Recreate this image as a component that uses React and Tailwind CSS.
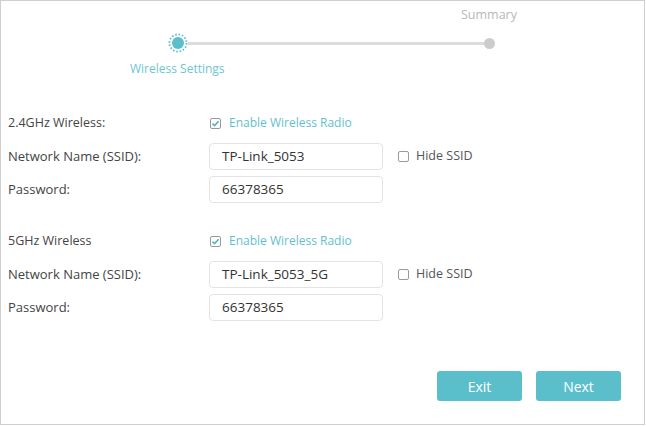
import React from "react";

const font = { fontFamily: '"Open Sans", "Noto Sans", sans-serif' };

function Check({ checked }) {
  return (
    <span className="flex h-[11px] w-[11px] items-center justify-center rounded-[2px] border border-[#9a9a9a] bg-white">
      {checked && (
        <svg width="9" height="9" viewBox="0 0 9 9">
          <path d="M1.5 4.6 L3.6 6.6 L7.6 2.3" fill="none" stroke="#4fb6c3" strokeWidth="1.6" />
        </svg>
      )}
    </span>
  );
}

function Input({ value }) {
  return (
    <div className="flex h-[27px] w-[174px] items-center rounded-[4px] border border-[#e3e3e3] pl-[12px] text-[13.5px] text-[#333]">
      {value}
    </div>
  );
}

function Section({ title, ssid, pwd }) {
  return (
    <div className="flex flex-col">
      <div className="flex h-[20px] items-center">
        <div className="w-[202px] text-[12.5px] text-[#444]">{title}</div>
        <div className="flex items-center gap-[8px]">
          <Check checked />
          <span className="text-[12px] text-[#5fc1cd]">Enable Wireless Radio</span>
        </div>
      </div>
      <div className="mt-[10px] flex items-center">
        <div className="w-[201px] text-[13px] text-[#444]">Network Name (SSID):</div>
        <Input value={ssid} />
        <div className="ml-[15px] flex items-center gap-[7px]">
          <Check />
          <span className="text-[12.5px] text-[#555]">Hide SSID</span>
        </div>
      </div>
      <div className="mt-[6px] flex items-center">
        <div className="w-[201px] text-[13px] text-[#444]">Password:</div>
        <Input value={pwd} />
      </div>
    </div>
  );
}

export default function App() {
  return (
    <div style={font} className="h-[426px] w-[646px] bg-white">
      <div className="flex h-[425px] w-[645px] flex-col border border-[#cfcfcf]">
        <div className="pt-[6px]">
          <div className="pl-[460px] text-[12.5px] leading-[16px] text-[#b8b8b8]">Summary</div>
          <div className="mt-[10px] flex items-center pl-[167px]">
            <svg width="20" height="20" viewBox="0 0 20 20">
              <circle cx="10" cy="10" r="8.6" fill="none" stroke="#5fc1cd" strokeWidth="1.8" strokeDasharray="1.6 1.8" />
              <circle cx="10" cy="10" r="6" fill="#5bbfcb" />
            </svg>
            <div className="h-[3px] w-[296px] bg-[#dcdcdc]" />
            <div className="h-[11px] w-[11px] rounded-full bg-[#cccccc]" />
          </div>
          <div className="mt-[8px] pl-[129px] text-[12px] leading-[16px] text-[#6cc6d1]">Wireless Settings</div>
        </div>
        <div className="mt-[36px] flex flex-col gap-[28px] pl-[7px]">
          <Section title="2.4GHz Wireless:" ssid="TP-Link_5053" pwd="66378365" />
          <Section title="5GHz Wireless" ssid="TP-Link_5053_5G" pwd="66378365" />
        </div>
        <div className="mt-auto mb-[23px] flex justify-end gap-[14px] pr-[23px]">
          <div className="flex h-[30px] w-[85px] items-center justify-center rounded-[3px] bg-[#5bbfcb] text-[14px] text-white">Exit</div>
          <div className="flex h-[30px] w-[85px] items-center justify-center rounded-[3px] bg-[#5bbfcb] text-[14px] text-white">Next</div>
        </div>
      </div>
    </div>
  );
}
